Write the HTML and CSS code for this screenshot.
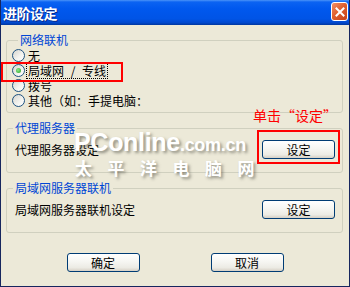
FILE: index.html
```html
<!DOCTYPE html>
<html lang="zh-CN">
<head>
<meta charset="utf-8">
<title>进阶设定</title>
<link rel="stylesheet" href="styles.css">
</head>
<body>
<div class="window">
  <div class="titlebar">
    <span class="title">进阶设定</span>
    <span class="close"><svg width="10" height="10" viewBox="0 0 10 10"><path d="M1.5 1.5L8.5 8.5M8.5 1.5L1.5 8.5" stroke="#fff" stroke-width="2" stroke-linecap="square"/></svg></span>
  </div>
  <div class="content">
    <fieldset class="group group-net">
      <legend>网络联机</legend>
      <div class="radio-row"><span class="radio"></span><span class="label">无</span></div>
      <div class="radio-row"><span class="radio checked"></span><span class="label focus">局域网 / 专线</span></div>
      <div class="radio-row"><span class="radio"></span><span class="label">拨号</span></div>
      <div class="radio-row"><span class="radio"></span><span class="label clip">其他（如：手提电脑：</span></div>
    </fieldset>
    <fieldset class="group">
      <legend>代理服务器</legend>
      <div class="set-row"><span>代理服务器设定</span><button class="btn">设定</button></div>
    </fieldset>
    <fieldset class="group">
      <legend>局域网服务器联机</legend>
      <div class="set-row"><span>局域网服务器联机设定</span><button class="btn">设定</button></div>
    </fieldset>
    <div class="actions"><button class="btn">确定</button><button class="btn">取消</button></div>
  </div>
  <div class="mark-box mark-row"></div>
  <div class="mark-box mark-btn"></div>
  <div class="mark-text">单击“设定”</div>
  <div class="watermark">
    <div class="wm-en">PConline<span class="wm-small">.com.cn</span></div>
    <div class="wm-cn">太平洋电脑网</div>
  </div>
</div>
</body>
</html>
```

FILE: styles.css
```css
html, body {
  margin: 0;
  padding: 0;
  background: #ECE9D8;
}
body {
  font-family: "Noto Sans CJK SC", "Noto Sans", sans-serif;
  font-size: 12px;
  color: #000;
}
.window {
  position: relative;
  width: 350px;
  height: 287px;
  box-sizing: border-box;
  border: 1px solid #16265e;
  border-top: 0;
  background: #ECE9D8;
  overflow: hidden;
}
.titlebar {
  margin: 0 -1px;
  height: 25px;
  display: flex;
  align-items: center;
  justify-content: space-between;
  background: linear-gradient(#4a94f8 0, #0b63f2 2px, #0058ee 35%, #0054e6 75%, #0049cf 90%, #00379f 100%);
}
.title {
  padding-left: 3px;
  color: #fff;
  font-weight: bold;
  font-size: 14px;
  line-height: 20px;
  letter-spacing: -0.5px;
  text-shadow: 1px 1px 0 #0a2a8a;
}
.close {
  width: 17px;
  height: 19px;
  margin-right: 2px;
  margin-top: -2px;
  box-sizing: border-box;
  border: 1px solid #fff;
  border-radius: 3px;
  background: linear-gradient(135deg, #f0906a 0%, #e0602f 45%, #c5401a 100%);
  display: flex;
  align-items: center;
  justify-content: center;
}
.content {
  display: flex;
  flex-direction: column;
}
.group {
  margin: 8px 6px 0 5px;
  padding: 0;
  min-width: 0;
  border: 1px solid #D0D0BF;
  border-radius: 3px;
}
.group legend {
  margin-left: 6px;
  padding: 0 2px;
  color: #0046D5;
  font-size: 12px;
  line-height: 14px;
}
.group-net {
  padding: 1px 0 4px 5px;
}
.radio-row {
  display: flex;
  align-items: center;
  height: 15px;
  white-space: nowrap;
}
.radio {
  position: relative;
  width: 13px;
  height: 13px;
  box-sizing: border-box;
  border: 1px solid #1C5180;
  border-radius: 50%;
  background: linear-gradient(135deg, #d4d4ce 0%, #f4f4f0 60%, #fff 100%);
  margin-right: 2px;
  flex: none;
}
.radio.checked::after {
  content: "";
  position: absolute;
  left: 3px;
  top: 3px;
  width: 5px;
  height: 5px;
  border-radius: 50%;
  background: radial-gradient(circle at 40% 40%, #8ee88a, #21a121);
}
.label {
  padding: 0 1px;
  line-height: 14px;
}
.label.focus {
  outline: 1px dotted #000;
  word-spacing: 4px;
}
.label.clip {
  display: inline-block;
  width: 115px;
  overflow: hidden;
}
.set-row {
  display: flex;
  align-items: center;
  justify-content: space-between;
  padding: 5px 7px 13px 8px;
  line-height: 19px;
}
.btn {
  width: 73px;
  height: 19px;
  padding: 0;
  box-sizing: border-box;
  border: 1px solid #003C74;
  border-radius: 3px;
  background: linear-gradient(#ffffff 0%, #f6f6f2 45%, #ecebe4 80%, #d6d0c5 100%);
  font-family: inherit;
  font-size: 12px;
  line-height: 17px;
  color: #000;
}
.actions {
  display: flex;
  justify-content: center;
  gap: 71px;
  margin-top: 20px;
}
.mark-box {
  position: absolute;
  box-sizing: border-box;
  border: 2px solid #f00;
}
.mark-row {
  left: 0;
  top: 62px;
  width: 122px;
  height: 20px;
}
.mark-btn {
  left: 256px;
  top: 130px;
  width: 83px;
  height: 34px;
}
.mark-text {
  position: absolute;
  left: 252px;
  top: 107px;
  color: #f00;
  font-size: 14px;
  line-height: 17px;
  white-space: nowrap;
}
.watermark {
  position: absolute;
  left: 73px;
  top: 128px;
  color: #fff;
  font-weight: bold;
  text-shadow: 2px 2px 3px rgba(70, 70, 60, 0.55);
  white-space: nowrap;
}
.wm-en {
  font-family: "Liberation Sans", Arial, sans-serif;
  font-size: 25px;
  line-height: 28px;
  letter-spacing: -0.3px;
}
.wm-small {
  font-size: 18px;
}
.wm-cn {
  font-family: "Noto Sans CJK SC", sans-serif;
  font-size: 17px;
  line-height: 18px;
  letter-spacing: 15.5px;
  margin-left: 1px;
}
```
